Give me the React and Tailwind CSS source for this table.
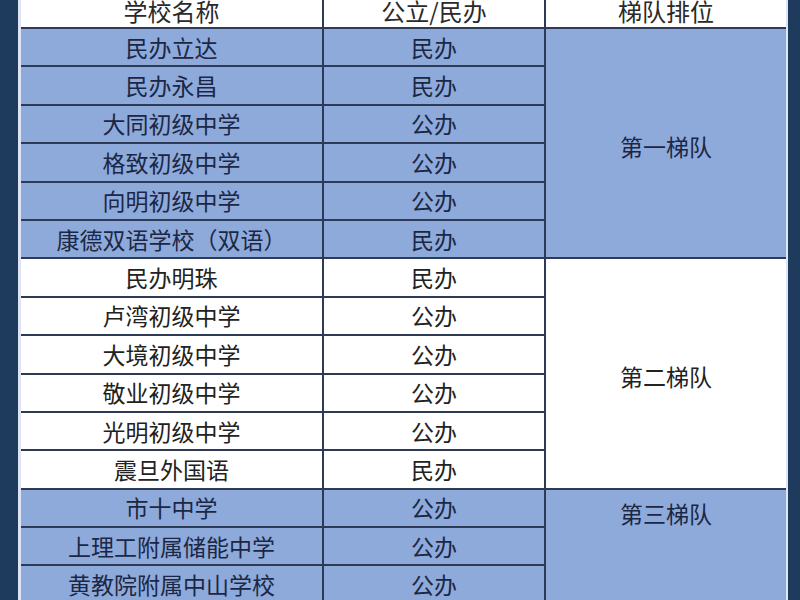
const groups = [
  {
    label: '第一梯队',
    fill: 'bg-[#8eaadb]',
    text: 'text-[#1b2744]',
    rows: [
      ['民办立达', '民办'],
      ['民办永昌', '民办'],
      ['大同初级中学', '公办'],
      ['格致初级中学', '公办'],
      ['向明初级中学', '公办'],
      ['康德双语学校（双语）', '民办'],
    ],
  },
  {
    label: '第二梯队',
    fill: 'bg-white',
    text: 'text-[#222222]',
    rows: [
      ['民办明珠', '民办'],
      ['卢湾初级中学', '公办'],
      ['大境初级中学', '公办'],
      ['敬业初级中学', '公办'],
      ['光明初级中学', '公办'],
      ['震旦外国语', '民办'],
    ],
  },
  {
    label: '第三梯队',
    fill: 'bg-[#8eaadb]',
    text: 'text-[#1b2744]',
    top: true,
    rows: [
      ['市十中学', '公办'],
      ['上理工附属储能中学', '公办'],
      ['黄教院附属中山学校', '公办'],
      ['', ''],
    ],
  },
];

function App() {
  return (
    <div
      className="w-[800px] h-[600px] overflow-hidden bg-[#1e3b5d] pl-[18px] pr-[12px]"
      style={{ fontFamily: '"Noto Sans CJK SC", "Noto Sans", sans-serif' }}
    >
      <div className="-mt-[10px] border-l-[3px] border-r-[2px] border-[#dde5f4]">
        <table className="w-full border-collapse table-fixed">
          <colgroup>
            <col className="w-[302px]" />
            <col className="w-[222px]" />
            <col />
          </colgroup>
          <thead>
            <tr className="h-[38px] bg-white text-[#2a2a2a] text-[24px]">
              <th className="font-normal border-r-2 border-b-2 border-[#2d3a56] leading-none pt-[4px]">学校名称</th>
              <th className="font-normal border-r-2 border-b-2 border-[#2d3a56] leading-none pt-[4px]">公立/民办</th>
              <th className="font-normal border-b-2 border-[#2d3a56] leading-none pt-[4px]">梯队排位</th>
            </tr>
          </thead>
          <tbody>
            {groups.map((g) =>
              g.rows.map(([name, type], i) => (
                <tr key={g.label + i} className={`h-[38.4px] ${g.fill} ${g.text} text-[23px]`}>
                  <td className="text-center border-r-2 border-b-2 border-[#2d3a56] leading-none">{name}</td>
                  <td className="text-center border-r-2 border-b-2 border-[#2d3a56] leading-none">{type}</td>
                  {i === 0 && (
                    <td
                      rowSpan={g.rows.length}
                      className={`text-center border-b-2 border-[#2d3a56] leading-none ${g.top ? 'align-top pt-[12px]' : 'align-middle pt-[6px]'}`}
                    >
                      {g.label}
                    </td>
                  )}
                </tr>
              ))
            )}
          </tbody>
        </table>
      </div>
    </div>
  );
}

export default App;
